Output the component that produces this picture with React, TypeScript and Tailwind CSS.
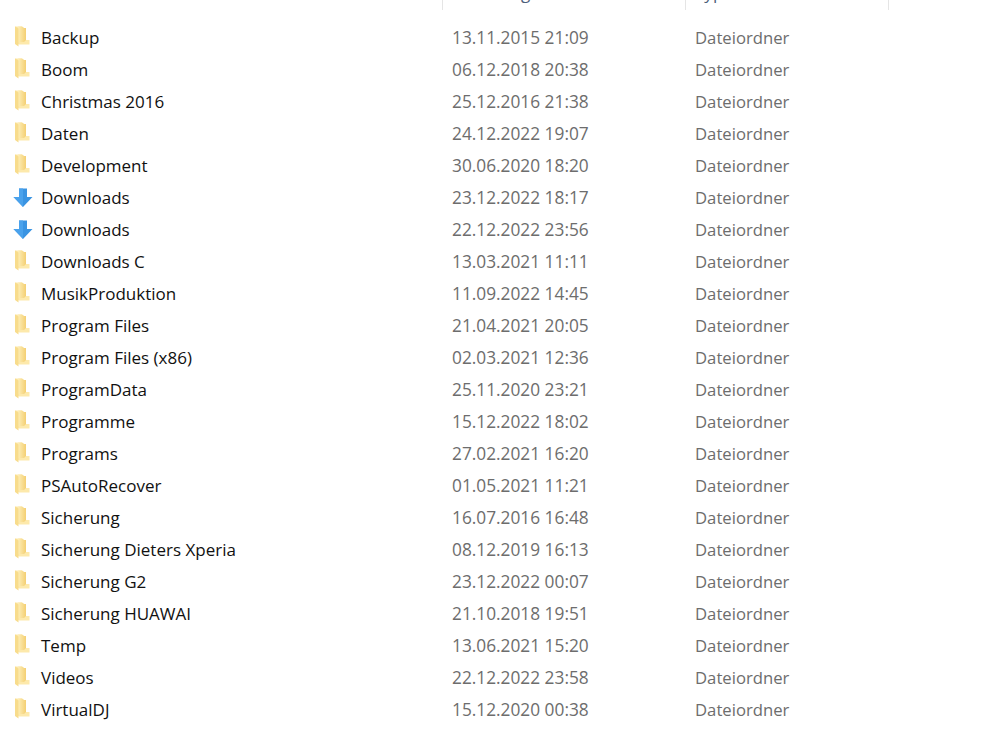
const rows: [string, string, boolean?][] = [
  ["Backup", "13.11.2015 21:09"],
  ["Boom", "06.12.2018 20:38"],
  ["Christmas 2016", "25.12.2016 21:38"],
  ["Daten", "24.12.2022 19:07"],
  ["Development", "30.06.2020 18:20"],
  ["Downloads", "23.12.2022 18:17", true],
  ["Downloads", "22.12.2022 23:56", true],
  ["Downloads C", "13.03.2021 11:11"],
  ["MusikProduktion", "11.09.2022 14:45"],
  ["Program Files", "21.04.2021 20:05"],
  ["Program Files (x86)", "02.03.2021 12:36"],
  ["ProgramData", "25.11.2020 23:21"],
  ["Programme", "15.12.2022 18:02"],
  ["Programs", "27.02.2021 16:20"],
  ["PSAutoRecover", "01.05.2021 11:21"],
  ["Sicherung", "16.07.2016 16:48"],
  ["Sicherung Dieters Xperia", "08.12.2019 16:13"],
  ["Sicherung G2", "23.12.2022 00:07"],
  ["Sicherung HUAWAI", "21.10.2018 19:51"],
  ["Temp", "13.06.2021 15:20"],
  ["Videos", "22.12.2022 23:58"],
  ["VirtualDJ", "15.12.2020 00:38"],
];

function FolderIcon() {
  return (
    <svg width="15" height="22" viewBox="0 0 15 22" className="shrink-0">
      <defs>
        <linearGradient id="fb" x1="0" y1="0" x2="1" y2="0">
          <stop offset="0" stopColor="#fdeeb8" />
          <stop offset="1" stopColor="#f4cf72" />
        </linearGradient>
      </defs>
      <path d="M0 0.5 L7 0.5 L9 2 L11 2 L11 14 L14.5 14 L14.5 18.5 L4 18.5 L0 16.5 Z" fill="#fde9ab" />
      <path d="M3 0.5 L7 0.5 L9 2 L11 2 L11 14 L9 16 L3 16 Z" fill="url(#fb)" />
      <path d="M0 0.5 L3.5 2.5 L3.5 20.5 L0 18 Z" fill="#f8dc8c" />
    </svg>
  );
}

function ArrowIcon() {
  return (
    <svg width="20" height="20" viewBox="0 0 20 20" className="shrink-0">
      <path d="M6 0.5 L14 0.5 L14 9 L19.5 9 L10 19 L0.5 9 L6 9 Z" fill="#3a94e2" />
      <path d="M6 0.5 L10 0.5 L10 19 L0.5 9 L6 9 Z" fill="#4aa2ec" />
    </svg>
  );
}

export default function App() {
  return (
    <div
      className="w-[992px] h-[749px] overflow-hidden bg-white"
      style={{ fontFamily: '"Open Sans", "Noto Sans", sans-serif' }}
    >
      <div className="flex h-[10px] overflow-hidden">
        <div className="w-[442px] shrink-0" />
        <div className="w-[243px] shrink-0 border-l border-[#e5e5e5] pl-[9px] pb-[6px] flex items-end">
          <span className="text-[17px] leading-[22px] text-[#4c607a] whitespace-nowrap">Änderungsdatum</span>
        </div>
        <div className="w-[203px] shrink-0 border-l border-[#e5e5e5] pl-[9px] pb-[6px] flex items-end">
          <span className="text-[17px] leading-[22px] text-[#4c607a]">Typ</span>
        </div>
        <div className="w-px bg-[#e5e5e5]" />
      </div>
      <div className="pt-[12px]">
        {rows.map(([name, date, dl], i) => (
          <div key={i} className="flex items-center h-[32px] text-[17px]">
            <div className="w-[442px] shrink-0 flex items-center">
              <div className="w-[41px] shrink-0 flex items-center">
                {dl ? (
                  <span className="pl-[13px] flex"><ArrowIcon /></span>
                ) : (
                  <span className="pl-[15px] flex -translate-y-px"><FolderIcon /></span>
                )}
              </div>
              <span className="text-[#111111] whitespace-nowrap">{name}</span>
            </div>
            <div className="w-[243px] shrink-0 pl-[10px] text-[17.3px] text-[#6d6d6d]">{date}</div>
            <div className="pl-[10px] text-[16.7px] text-[#6d6d6d]">Dateiordner</div>
          </div>
        ))}
      </div>
    </div>
  );
}
